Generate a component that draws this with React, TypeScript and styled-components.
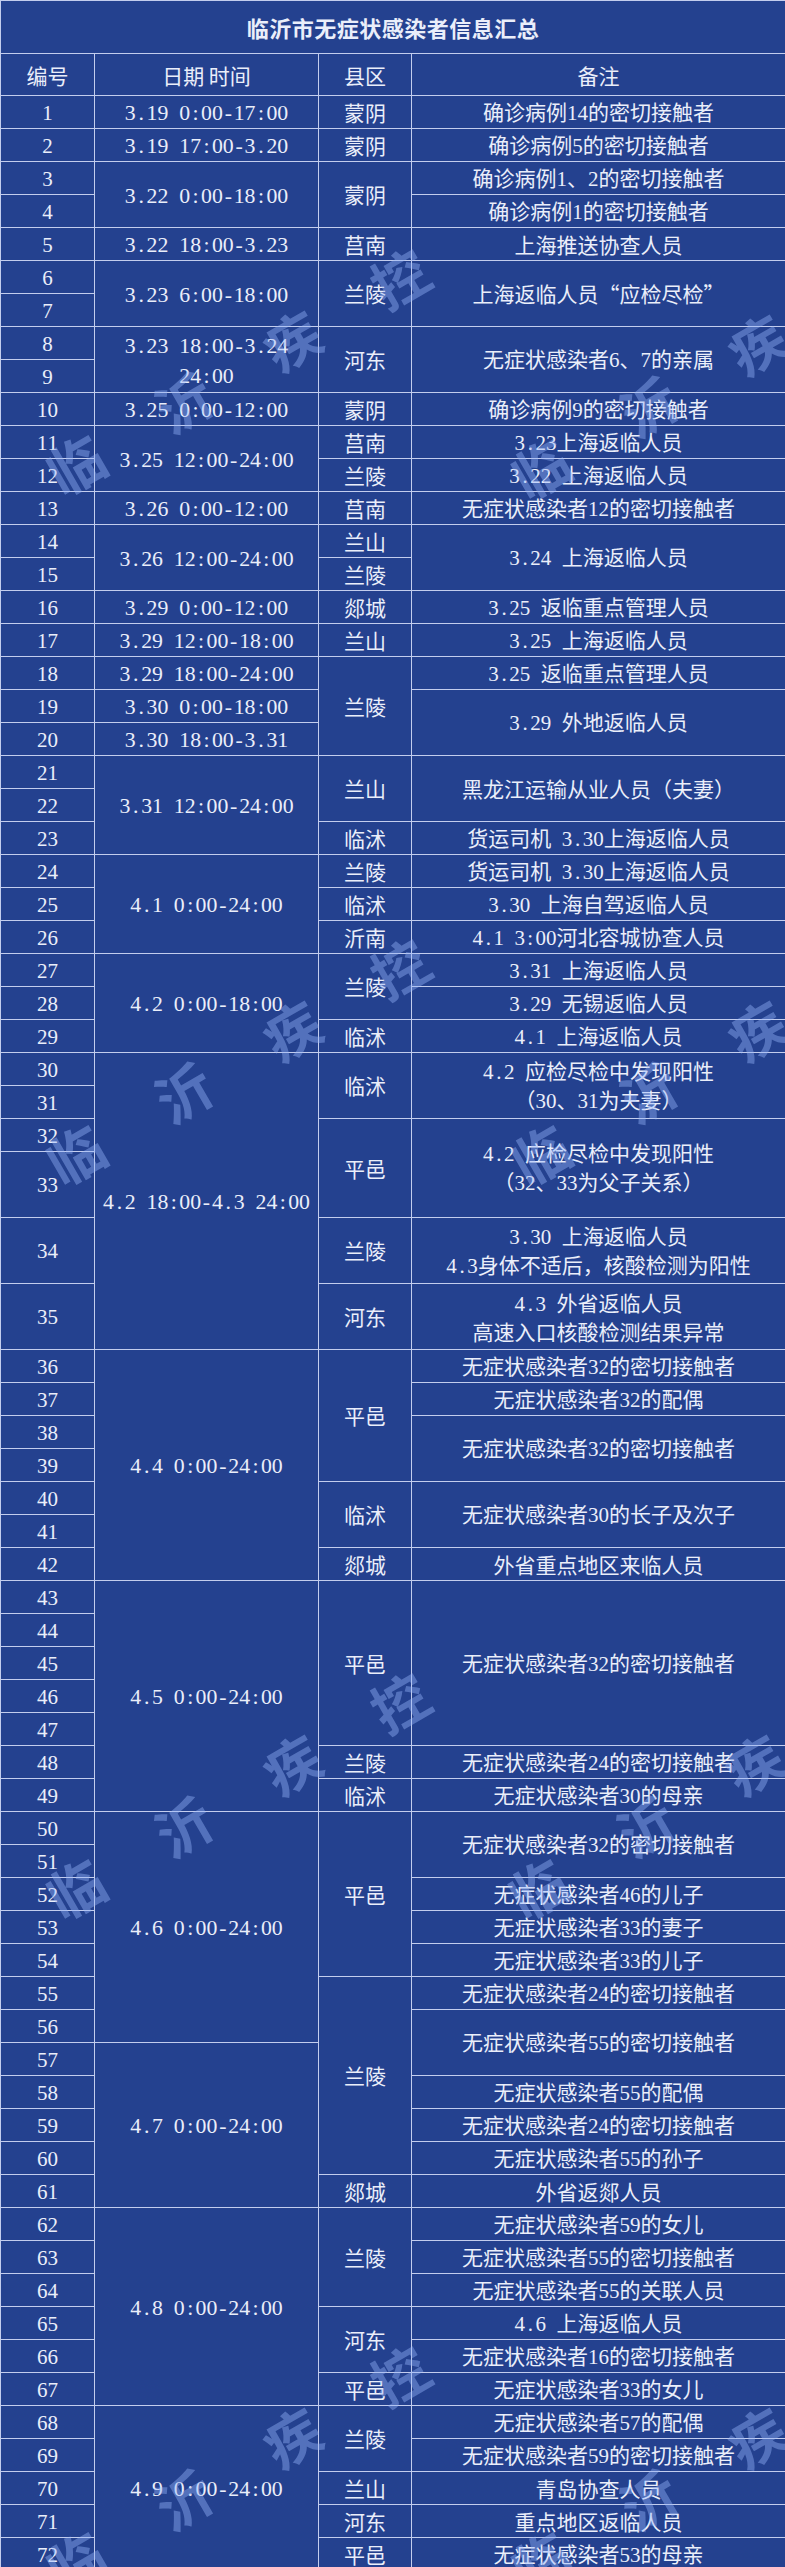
import React from 'react'
import styled, { createGlobalStyle } from 'styled-components'

const LINE = '#c3cdee'
const BG = '#24418f'

const GlobalStyle = createGlobalStyle`
  html, body {
    margin: 0;
    padding: 0;
    background: ${BG};
  }
  body {
    font-family: "Noto Sans CJK SC", sans-serif;
  }
`

const Page = styled.div`
  position: relative;
  width: 785px;
  overflow: hidden;
  background: ${BG};
`

const Sheet = styled.table`
  width: 785px;
  table-layout: fixed;
  border-collapse: collapse;
  color: #eaeefa;
  font-family: "Noto Sans CJK SC", sans-serif;
  font-size: 21px;
`

const Col = styled.col<{ $w: number }>`
  width: ${(p) => p.$w}px;
`

const TitleCell = styled.th`
  height: 52px;
  padding: 0;
  border: 1px solid ${LINE};
  font-size: 22px;
  font-weight: 700;
  letter-spacing: 0.5px;
  text-align: center;
  vertical-align: middle;
`

const HeadRow = styled.tr`
  height: 42px;
`

const HeadCell = styled.th`
  padding: 0;
  border: 1px solid ${LINE};
  font-weight: 400;
  text-align: center;
  vertical-align: middle;
`

const Row = styled.tr<{ $units: number }>`
  height: ${(p) => p.$units * 33}px;
`

const Cell = styled.td<{ $wide?: boolean }>`
  padding: 0;
  border: 1px solid ${LINE};
  text-align: center;
  vertical-align: middle;
  line-height: 27px;
  white-space: nowrap;
  font-size: ${(p) => (p.$wide ? '21.8px' : '21px')};
`

// half-width latin glyph, the way the sheet's song font sets digits
const Half = styled.span`
  display: inline-block;
  width: 0.5em;
  text-align: center;
  font-family: "Liberation Serif", serif;
`

const Watermark = styled.div`
  position: absolute;
  inset: 0;
  pointer-events: none;
`

const MarkChar = styled.span`
  position: absolute;
  transform: translate(-50%, -50%) rotate(-30deg);
  font-family: "Noto Sans CJK SC", sans-serif;
  font-size: 56px;
  font-weight: 700;
  line-height: 1;
  color: rgba(150, 180, 250, 0.42);
`

type Group = [number, string]

const dates: Group[] = [
  [1, '3.19 0:00-17:00'],
  [1, '3.19 17:00-3.20'],
  [2, '3.22 0:00-18:00'],
  [1, '3.22 18:00-3.23'],
  [2, '3.23 6:00-18:00'],
  [2, '3.23 18:00-3.24\n24:00'],
  [1, '3.25 0:00-12:00'],
  [2, '3.25 12:00-24:00'],
  [1, '3.26 0:00-12:00'],
  [2, '3.26 12:00-24:00'],
  [1, '3.29 0:00-12:00'],
  [1, '3.29 12:00-18:00'],
  [1, '3.29 18:00-24:00'],
  [1, '3.30 0:00-18:00'],
  [1, '3.30 18:00-3.31'],
  [3, '3.31 12:00-24:00'],
  [3, '4.1 0:00-24:00'],
  [3, '4.2 0:00-18:00'],
  [6, '4.2 18:00-4.3 24:00'],
  [7, '4.4 0:00-24:00'],
  [7, '4.5 0:00-24:00'],
  [7, '4.6 0:00-24:00'],
  [5, '4.7 0:00-24:00'],
  [6, '4.8 0:00-24:00'],
  [5, '4.9 0:00-24:00'],
]

const counties: Group[] = [
  [1, '蒙阴'], [1, '蒙阴'], [2, '蒙阴'], [1, '莒南'], [2, '兰陵'],
  [2, '河东'], [1, '蒙阴'], [1, '莒南'], [1, '兰陵'], [1, '莒南'],
  [1, '兰山'], [1, '兰陵'], [1, '郯城'], [1, '兰山'], [3, '兰陵'],
  [2, '兰山'], [1, '临沭'], [1, '兰陵'], [1, '临沭'], [1, '沂南'],
  [2, '兰陵'], [1, '临沭'], [2, '临沭'], [2, '平邑'], [1, '兰陵'],
  [1, '河东'], [4, '平邑'], [2, '临沭'], [1, '郯城'], [5, '平邑'],
  [1, '兰陵'], [1, '临沭'], [5, '平邑'], [6, '兰陵'], [1, '郯城'],
  [3, '兰陵'], [2, '河东'], [1, '平邑'], [2, '兰陵'], [1, '兰山'],
  [1, '河东'], [1, '平邑'],
]

const notes: Group[] = [
  [1, '确诊病例14的密切接触者'],
  [1, '确诊病例5的密切接触者'],
  [1, '确诊病例1、2的密切接触者'],
  [1, '确诊病例1的密切接触者'],
  [1, '上海推送协查人员'],
  [2, '上海返临人员“应检尽检”'],
  [2, '无症状感染者6、7的亲属'],
  [1, '确诊病例9的密切接触者'],
  [1, '3.23上海返临人员'],
  [1, '3.22 上海返临人员'],
  [1, '无症状感染者12的密切接触者'],
  [2, '3.24 上海返临人员'],
  [1, '3.25 返临重点管理人员'],
  [1, '3.25 上海返临人员'],
  [1, '3.25 返临重点管理人员'],
  [2, '3.29 外地返临人员'],
  [2, '黑龙江运输从业人员（夫妻）'],
  [1, '货运司机 3.30上海返临人员'],
  [1, '货运司机 3.30上海返临人员'],
  [1, '3.30 上海自驾返临人员'],
  [1, '4.1 3:00河北容城协查人员'],
  [1, '3.31 上海返临人员'],
  [1, '3.29 无锡返临人员'],
  [1, '4.1 上海返临人员'],
  [2, '4.2 应检尽检中发现阳性\n（30、31为夫妻）'],
  [2, '4.2 应检尽检中发现阳性\n（32、33为父子关系）'],
  [1, '3.30 上海返临人员\n4.3身体不适后，核酸检测为阳性'],
  [1, '4.3 外省返临人员\n高速入口核酸检测结果异常'],
  [1, '无症状感染者32的密切接触者'],
  [1, '无症状感染者32的配偶'],
  [2, '无症状感染者32的密切接触者'],
  [2, '无症状感染者30的长子及次子'],
  [1, '外省重点地区来临人员'],
  [5, '无症状感染者32的密切接触者'],
  [1, '无症状感染者24的密切接触者'],
  [1, '无症状感染者30的母亲'],
  [2, '无症状感染者32的密切接触者'],
  [1, '无症状感染者46的儿子'],
  [1, '无症状感染者33的妻子'],
  [1, '无症状感染者33的儿子'],
  [1, '无症状感染者24的密切接触者'],
  [2, '无症状感染者55的密切接触者'],
  [1, '无症状感染者55的配偶'],
  [1, '无症状感染者24的密切接触者'],
  [1, '无症状感染者55的孙子'],
  [1, '外省返郯人员'],
  [1, '无症状感染者59的女儿'],
  [1, '无症状感染者55的密切接触者'],
  [1, '无症状感染者55的关联人员'],
  [1, '4.6 上海返临人员'],
  [1, '无症状感染者16的密切接触者'],
  [1, '无症状感染者33的女儿'],
  [1, '无症状感染者57的配偶'],
  [1, '无症状感染者59的密切接触者'],
  [1, '青岛协查人员'],
  [1, '重点地区返临人员'],
  [1, '无症状感染者53的母亲'],
]

const tallRows = [33, 34, 35]

const startsOf = (groups: Group[]) => {
  const m = new Map<number, Group>()
  let i = 1
  for (const g of groups) {
    m.set(i, g)
    i += g[0]
  }
  return m
}

const dateStarts = startsOf(dates)
const countyStarts = startsOf(counties)
const noteStarts = startsOf(notes)

const Txt = ({ text }: { text: string }) => {
  const lines = text.split('\n')
  return (
    <>
      {lines.map((line, li) => {
        const parts: React.ReactNode[] = []
        let run = ''
        Array.from(line).forEach((ch, ci) => {
          if (ch.charCodeAt(0) < 128) {
            if (run) {
              parts.push(run)
              run = ''
            }
            parts.push(<Half key={ci}>{ch === ' ' ? '\u00a0' : ch}</Half>)
          } else {
            run += ch
          }
        })
        if (run) parts.push(run)
        return (
          <React.Fragment key={li}>
            {li > 0 && <br />}
            {parts}
          </React.Fragment>
        )
      })}
    </>
  )
}

// span of rows covered by a group, counting tall rows twice is not needed: rowSpan is in rows
const marks: [number, number][] = [
  [75, 463],
  [540, 467],
  [75, 1153],
  [540, 1153],
  [75, 1887],
  [537, 1887],
  [75, 2560],
  [540, 2560],
]

export default function App() {
  const rows = Array.from({ length: 72 }, (_, i) => i + 1)

  return (
    <Page>
      <GlobalStyle />
      <Sheet>
        <colgroup>
          <Col $w={94} />
          <Col $w={224} />
          <Col $w={93} />
          <Col $w={374} />
        </colgroup>
        <thead>
          <tr>
            <TitleCell colSpan={4}>临沂市无症状感染者信息汇总</TitleCell>
          </tr>
          <HeadRow>
            <HeadCell>编号</HeadCell>
            <HeadCell>日期 时间</HeadCell>
            <HeadCell>县区</HeadCell>
            <HeadCell>备注</HeadCell>
          </HeadRow>
        </thead>
        <tbody>
          {rows.map((n) => {
            const d = dateStarts.get(n)
            const c = countyStarts.get(n)
            const t = noteStarts.get(n)
            return (
              <Row key={n} $units={tallRows.includes(n) ? 2 : 1}>
                <Cell>
                  <Txt text={String(n)} />
                </Cell>
                {d && (
                  <Cell rowSpan={d[0]} $wide>
                    <Txt text={d[1]} />
                  </Cell>
                )}
                {c && <Cell rowSpan={c[0]}>{c[1]}</Cell>}
                {t && (
                  <Cell rowSpan={t[0]}>
                    <Txt text={t[1]} />
                  </Cell>
                )}
              </Row>
            )
          })}
        </tbody>
      </Sheet>
      <Watermark>
        {marks.map(([x, y], gi) =>
          Array.from('临沂疾控').map((ch, ci) => (
            <MarkChar
              key={`${gi}-${ci}`}
              style={{ left: x + ci * 108, top: y - ci * 62 }}
            >
              {ch}
            </MarkChar>
          ))
        )}
      </Watermark>
    </Page>
  )
}
